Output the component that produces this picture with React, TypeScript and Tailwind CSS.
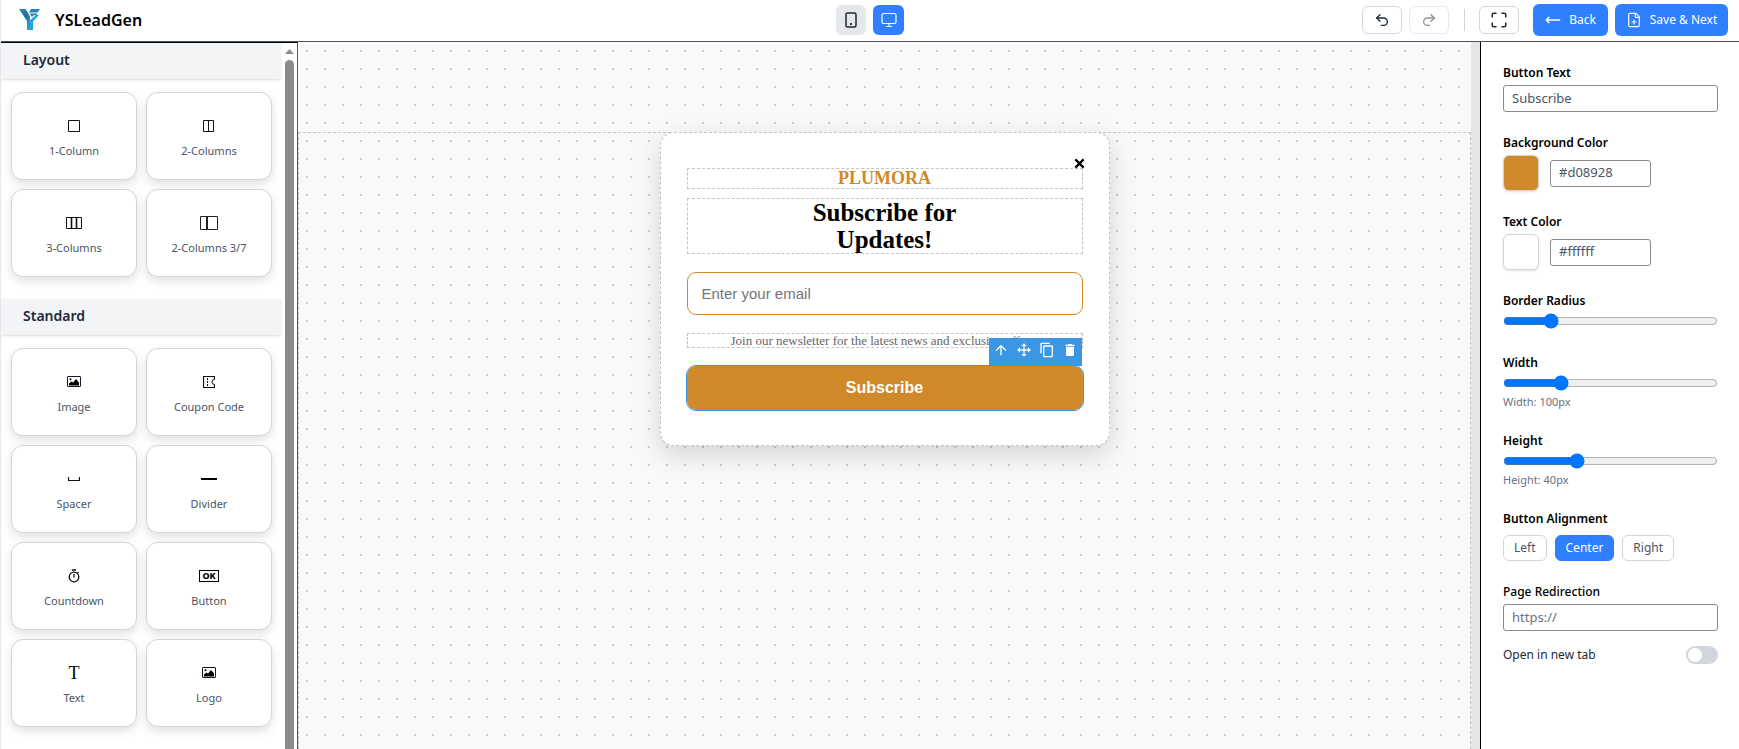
import { useState } from 'react';
import { FilePlus, Maximize, MoveLeft, Redo2, Undo2 } from 'lucide-react';

interface Block {
  label: string;
  icon: React.ReactNode;
}

interface Section {
  title: string;
  blocks: Block[];
}

const pictureIcon = (
  <svg width="14" height="12" viewBox="0 0 14 12">
    <rect x="0.5" y="0.5" width="13" height="10" rx="0.500" fill="none" stroke="#111827" />
    <path d="M2 9.500V7.500l2.500-2 1.500 1 3-3.500 3 3.500v3z" />
    <circle cx="3.500" cy="3.200" r="1" />
  </svg>
);

const sections: Section[] = [
  {
    title: 'Layout',
    blocks: [
      {
        label: '1-Column',
        icon: (
          <svg width="12" height="12" viewBox="0 0 12 12" fill="none" stroke="#111">
            <path d="M.5 .5h11v11H.5z" />
          </svg>
        ),
      },
      {
        label: '2-Columns',
        icon: (
          <svg width="12" height="12" viewBox="0 0 12 12" fill="none" stroke="#111">
            <path d="M.5 .5h10v11H.5zM5.500 .5v11" />
          </svg>
        ),
      },
      {
        label: '3-Columns',
        icon: (
          <svg width="16" height="12" viewBox="0 0 16 12" fill="none" stroke="#111">
            <path d="M.5 .5h15v11H.5z" />
            <path d="M5.500 .5v11M10.500 .5v11" strokeWidth="1.600" />
          </svg>
        ),
      },
      {
        label: '2-Columns 3/7',
        icon: (
          <svg width="18" height="14" viewBox="0 0 18 14" fill="none" stroke="#222">
            <path d="M.5 .5h17v13H.5z" />
            <path d="M7 .5v13" strokeWidth="2" />
          </svg>
        ),
      },
    ],
  },
  {
    title: 'Standard',
    blocks: [
      { label: 'Image', icon: pictureIcon },
      {
        label: 'Coupon Code',
        icon: (
          <svg width="12" height="12" viewBox="0 0 12 12" fill="none" stroke="#111">
            <path d="M11.500 3.500V.5H.5v11h11v-3" strokeWidth="1.200" />
            <path d="M11.500 3.500a2.500 2.500 0 0 0 0 5" />
            <path d="M4.500 2v8" strokeDasharray="2 1" />
          </svg>
        ),
      },
      {
        label: 'Spacer',
        icon: (
          <svg width="12" height="12" viewBox="0 0 12 12" fill="none" stroke="#111">
            <path d="M.5 4v3.500h11V4" strokeWidth="1.200" />
          </svg>
        ),
      },
      {
        label: 'Divider',
        icon: (
          <svg width="16" height="12" viewBox="0 0 16 12">
            <path d="M0 5h16v2H0z" />
          </svg>
        ),
      },
      {
        label: 'Countdown',
        icon: (
          <svg width="12" height="14" viewBox="0 0 12 14" fill="none" stroke="#111" strokeWidth="1.300">
            <circle cx="6" cy="8" r="4.800" />
            <path d="M4 1h4M6 5v3.500M9.500 4l1-1" />
          </svg>
        ),
      },
      {
        label: 'Button',
        icon: (
          <span className="flex h-3 w-5 items-center justify-center border border-black font-['Noto_Sans',sans-serif] text-[9px] leading-none font-extrabold text-black">
            OK
          </span>
        ),
      },
      {
        label: 'Text',
        icon: <span className="font-['Liberation_Serif',serif] text-lg leading-3 text-black">T</span>,
      },
      { label: 'Logo', icon: pictureIcon },
    ],
  },
];

const toolbarActions = [
  {
    label: 'Select parent',
    path: 'M13,20H11V8L5.500,13.500L4.080,12.080L12,4.160L19.920,12.080L18.500,13.500L13,8V20Z',
  },
  {
    label: 'Move',
    path: 'M13,6V11H18V7.750L22.250,12L18,16.250V13H13V18H16.250L12,22.250L7.750,18H11V13H6V16.250L1.750,12L6,7.750V11H11V6H7.750L12,1.750L16.250,6H13Z',
  },
  {
    label: 'Duplicate',
    path: 'M19,21H8V7H19M19,5H8A2,2 0 0,0 6,7V21A2,2 0 0,0 8,23H19A2,2 0 0,0 21,21V7A2,2 0 0,0 19,5M16,1H4A2,2 0 0,0 2,3V17H4V3H16V1Z',
  },
  {
    label: 'Delete',
    path: 'M19,4H15.500L14.500,3H9.500L8.500,4H5V6H19M6,19A2,2 0 0,0 8,21H16A2,2 0 0,0 18,19V7H6V19Z',
  },
];

export default function App() {
  return (
    <div className="flex h-screen flex-col overflow-hidden border-l border-gray-200 bg-white font-['Noto_Sans',sans-serif] text-black">
      <Header />
      <div className="flex min-h-0 flex-1">
        <Sidebar />
        <Canvas />
        <SettingsPanel />
      </div>
    </div>
  );
}

function Header() {
  return (
    <header className="grid h-[42px] shrink-0 grid-cols-[1fr_auto_1fr] items-center border-b border-gray-600 px-[11px] pb-[2px]">
      <div className="flex items-center gap-[15px] pl-[7px]">
        <Logo />
        <h1 className="text-base leading-5 font-semibold">YSLeadGen</h1>
      </div>

      {/* Device preview */}
      <div className="flex gap-[7px]">
        <button aria-label="Mobile" className="flex h-[30px] w-[30px] items-center justify-center rounded-md bg-gray-200">
          <svg width="12" height="16" viewBox="0 0 12 16">
            <rect x="1" y="1" width="10" height="14" rx="1.500" fill="none" stroke="#1f2937" strokeWidth="1.500" />
            <circle cx="6" cy="12" r="1" />
          </svg>
        </button>
        <button aria-label="Desktop" className="flex h-[30px] w-[31px] items-center justify-center rounded-md bg-[#2f7fff]">
          <svg width="16" height="16" viewBox="0 0 16 16" fill="none" stroke="#fff" strokeWidth="1.200">
            <rect x="1" y="1.500" width="14" height="10" rx="1.500" />
            <path d="M8 11.500v3M5 14.500h6" />
          </svg>
        </button>
      </div>

      <div className="flex items-center justify-end">
        <button aria-label="Undo" className="flex h-7 w-10 items-center justify-center rounded-md border border-gray-300 text-gray-800">
          <Undo2 className="h-4 w-4" />
        </button>
        <button aria-label="Redo" disabled className="ml-[7px] flex h-7 w-10 items-center justify-center rounded-md border border-gray-300 text-gray-800 opacity-50">
          <Redo2 className="h-4 w-4" />
        </button>
        <div className="mr-[14px] ml-[15px] h-[22px] w-px bg-gray-300" />
        <button aria-label="Fullscreen" className="flex h-7 w-10 items-center justify-center rounded-md border border-gray-300 text-gray-800">
          <Maximize className="h-[18px] w-[18px]" />
        </button>
        <button className="ml-[14px] flex h-8 w-[75px] items-center justify-center gap-2 rounded-md bg-[#2f7fff] text-xs text-white">
          <MoveLeft className="h-4 w-4" strokeWidth={2} />
          Back
        </button>
        <button className="ml-[7px] flex h-8 w-[113px] items-center justify-center gap-2 rounded-md bg-[#2f7fff] text-xs whitespace-nowrap text-white">
          <FilePlus className="h-4 w-4 shrink-0" strokeWidth={1.75} />
          Save &amp; Next
        </button>
      </div>
    </header>
  );
}

function Logo() {
  return (
    <svg width="21" height="21" viewBox="0 0 21 21">
      <defs>
        <linearGradient id="stem" x1="0" y1="0" x2="1" y2="1">
          <stop offset="0" stopColor="#2a8fbd" />
          <stop offset="0.500" stopColor="#1c6f9f" />
          <stop offset="1" stopColor="#2bb3e8" />
        </linearGradient>
      </defs>
      <path d="M0 0h6.500l4.500 7.500V21H8v-9z" fill="url(#stem)" />
      <path d="M20 6 14 12.500V21h-3.500v-9.500L17 6z" fill="#22a6e0" />
      <path d="M21 0h-9l-2 3.500h8.500zM18.500 4.500h-8L13 8l1.500-1.800h3z" fill="#2484b4" />
    </svg>
  );
}

function Sidebar() {
  return (
    <aside className="flex w-[297px] shrink-0 overflow-hidden border-t border-r border-t-black border-r-gray-600">
      <div className="min-w-0 flex-1">
        {sections.map((section) => (
          <section key={section.title}>
            <h2 className="flex h-9 items-center bg-gray-100 pb-[2px] pl-[22px] text-sm font-semibold text-gray-800 shadow-sm">
              {section.title}
            </h2>
            <div className="grid grid-cols-2 gap-[9px] px-[10px] pt-[13px] pb-[22px]">
              {section.blocks.map((block) => (
                <BlockCard key={block.label} block={block} />
              ))}
            </div>
          </section>
        ))}
      </div>

      {/* Scroll track */}
      <div className="flex w-[15px] flex-col items-center gap-[6px] bg-white pt-[6px]">
        <svg width="9" height="5" viewBox="0 0 9 5">
          <path d="M4.500 0 9 5H0z" fill="#8b8b8b" />
        </svg>
        <div className="w-[9px] flex-1 rounded-t-full bg-[#8b8b8b]" />
      </div>
    </aside>
  );
}

function BlockCard({ block }: { block: Block }) {
  return (
    <button className="flex h-[88px] flex-col items-center justify-center gap-[9px] rounded-xl border border-gray-300 bg-white pt-1 shadow-[0_4px_10px_rgba(0,0,0,0.12)]">
      <span className="flex h-4 items-center">{block.icon}</span>
      <span className="text-[11px] leading-4 text-gray-600">{block.label}</span>
    </button>
  );
}

function Canvas() {
  return (
    <main className="flex min-w-0 flex-1 bg-[#f9f9f9]">
      <div className="flex flex-1 flex-col bg-[radial-gradient(#cccccc_1px,transparent_1px)] bg-size-[18px_18px] pt-[90px]">
        <div className="flex flex-1 items-start justify-center border border-b-0 border-dashed border-[#c4c4c4]">
          <Popup />
        </div>
      </div>
      <div className="w-[9px] shrink-0 bg-[#e6e6e6]" />
    </main>
  );
}

function Popup() {
  return (
    <div className="relative -mt-px w-[450px] rounded-[14px] border border-dashed border-[#c4c4c4] bg-white px-[26px] py-[35px] shadow-[0_9px_27px_rgba(0,0,0,0.15)]">
      <button aria-label="Close" className="absolute top-[22px] right-[21px] flex h-4 w-4 items-center justify-center">
        <svg width="11" height="11" viewBox="0 0 12 12" stroke="#000" strokeWidth="2.500">
          <path d="m1.500 1.500 9 9M10.500 1.500l-9 9" />
        </svg>
      </button>

      <div className="border border-dashed border-[#c4c4c4] text-center font-['Liberation_Serif',serif] text-lg leading-[19px] font-bold text-[#d08928]">
        PLUMORA
      </div>
      <h2 className="mt-[9px] h-14 border border-dashed border-[#c4c4c4] text-center font-['Liberation_Serif',serif] text-[25px] leading-[27px] font-bold">
        Subscribe for
        <br />
        Updates!
      </h2>
      <input
        type="email"
        aria-label="Email"
        placeholder="Enter your email"
        className="mt-[18px] block h-[43px] w-full rounded-[9px] border border-[#d08928] px-[14px] font-['Liberation_Sans',sans-serif] text-[15px] placeholder:text-[#757575]"
      />
      <p className="mt-[18px] border border-dashed border-[#c4c4c4] text-center font-['Liberation_Serif',serif] text-[13px] leading-[13px] text-[#666666]">
        Join our newsletter for the latest news and exclusive offers.
      </p>

      {/* Selected element */}
      <div className="relative mt-[18px]">
        <div className="absolute right-px bottom-full flex h-7 items-start bg-[#3b97e3] pt-1 pl-px">
          {toolbarActions.map((action) => (
            <button key={action.label} aria-label={action.label} className="flex w-[23px] justify-center">
              <svg width="16" height="16" viewBox="0 0 24 24" fill="#fff">
                <path d={action.path} />
              </svg>
            </button>
          ))}
        </div>
        <button className="block h-11 w-full rounded-[9px] bg-[#d08928] font-['Liberation_Sans',sans-serif] text-base font-bold text-white outline outline-[#3b97e3]">
          Subscribe
        </button>
      </div>
    </div>
  );
}

function SettingsPanel() {
  const [alignment, setAlignment] = useState('Center');

  return (
    <aside className="w-[259px] shrink-0 border-l border-black bg-white pt-[21px] pr-[21px] pl-[22px] text-[13px]">
      <div className="mb-[21px]">
        <FieldLabel htmlFor="button-text">Button Text</FieldLabel>
        <TextInput id="button-text" defaultValue="Subscribe" className="w-full" />
      </div>

      <ColorField id="background-color" label="Background Color" value="#d08928" />
      <ColorField id="text-color" label="Text Color" value="#ffffff" />

      <RangeField id="border-radius" label="Border Radius" min={0} max={50} value={10} />
      <RangeField id="width" label="Width" min={50} max={250} value={100} showValue />
      <RangeField id="height" label="Height" min={20} max={80} value={40} showValue />

      <div className="mb-[21px]">
        <p className="mb-[6px] text-xs leading-5 font-semibold">Button Alignment</p>
        <div className="flex gap-2">
          {['Left', 'Center', 'Right'].map((option) => (
            <button
              key={option}
              onClick={() => setAlignment(option)}
              className={`h-[26px] rounded-md border px-[10px] text-xs ${
                alignment === option
                  ? 'border-[#2f7fff] bg-[#2f7fff] text-white'
                  : 'border-gray-300 bg-white text-gray-600'
              }`}
            >
              {option}
            </button>
          ))}
        </div>
      </div>

      <div className="mb-[14px]">
        <label htmlFor="redirect" className="mb-[2px] block text-xs leading-5 font-medium">
          Page Redirection
        </label>
        <TextInput id="redirect" placeholder="https://" className="w-full" />
      </div>

      <div className="flex items-center justify-between">
        <label htmlFor="new-tab" className="text-xs leading-5 text-gray-800">
          Open in new tab
        </label>
        <input
          id="new-tab"
          type="checkbox"
          role="switch"
          className="h-[18px] w-8 appearance-none rounded-full bg-gray-300 p-[2px] before:block before:h-[14px] before:w-[14px] before:rounded-full before:bg-white checked:bg-[#2f7fff] checked:before:ml-[14px]"
        />
      </div>
    </aside>
  );
}

function FieldLabel({ htmlFor, children }: { htmlFor: string; children: React.ReactNode }) {
  return (
    <label htmlFor={htmlFor} className="mb-[2px] block text-xs leading-5 font-semibold">
      {children}
    </label>
  );
}

function TextInput({ className, ...props }: React.ComponentProps<'input'>) {
  return (
    <input
      type="text"
      className={`block h-[27px] rounded-[3px] border border-[#8a8a8f] px-2 pb-[2px] text-[13px] text-gray-600 placeholder:text-gray-500 ${className}`}
      {...props}
    />
  );
}

function ColorField({ id, label, value }: { id: string; label: string; value: string }) {
  return (
    <div className="mb-[21px]">
      <FieldLabel htmlFor={id}>{label}</FieldLabel>
      <div className="flex items-center gap-[11px]">
        <button
          aria-label={`Pick ${label}`}
          className="h-9 w-9 rounded-md border border-gray-300 shadow-sm"
          style={{ backgroundColor: value }}
        />
        <TextInput id={id} defaultValue={value} className="w-[101px]" />
      </div>
    </div>
  );
}

interface RangeFieldProps {
  id: string;
  label: string;
  min: number;
  max: number;
  value: number;
  showValue?: boolean;
}

function RangeField({ id, label, min, max, value, showValue }: RangeFieldProps) {
  const [current, setCurrent] = useState(value);

  return (
    <div className={showValue ? 'mb-[21px]' : 'mb-6'}>
      <FieldLabel htmlFor={id}>{label}</FieldLabel>
      <input
        id={id}
        type="range"
        min={min}
        max={max}
        value={current}
        onChange={(e) => setCurrent(Number(e.target.value))}
        className="block h-4 w-full"
      />
      {showValue && (
        <p className="mt-[3px] text-[11px] leading-4 text-gray-500">
          {label}: {current}px
        </p>
      )}
    </div>
  );
}
